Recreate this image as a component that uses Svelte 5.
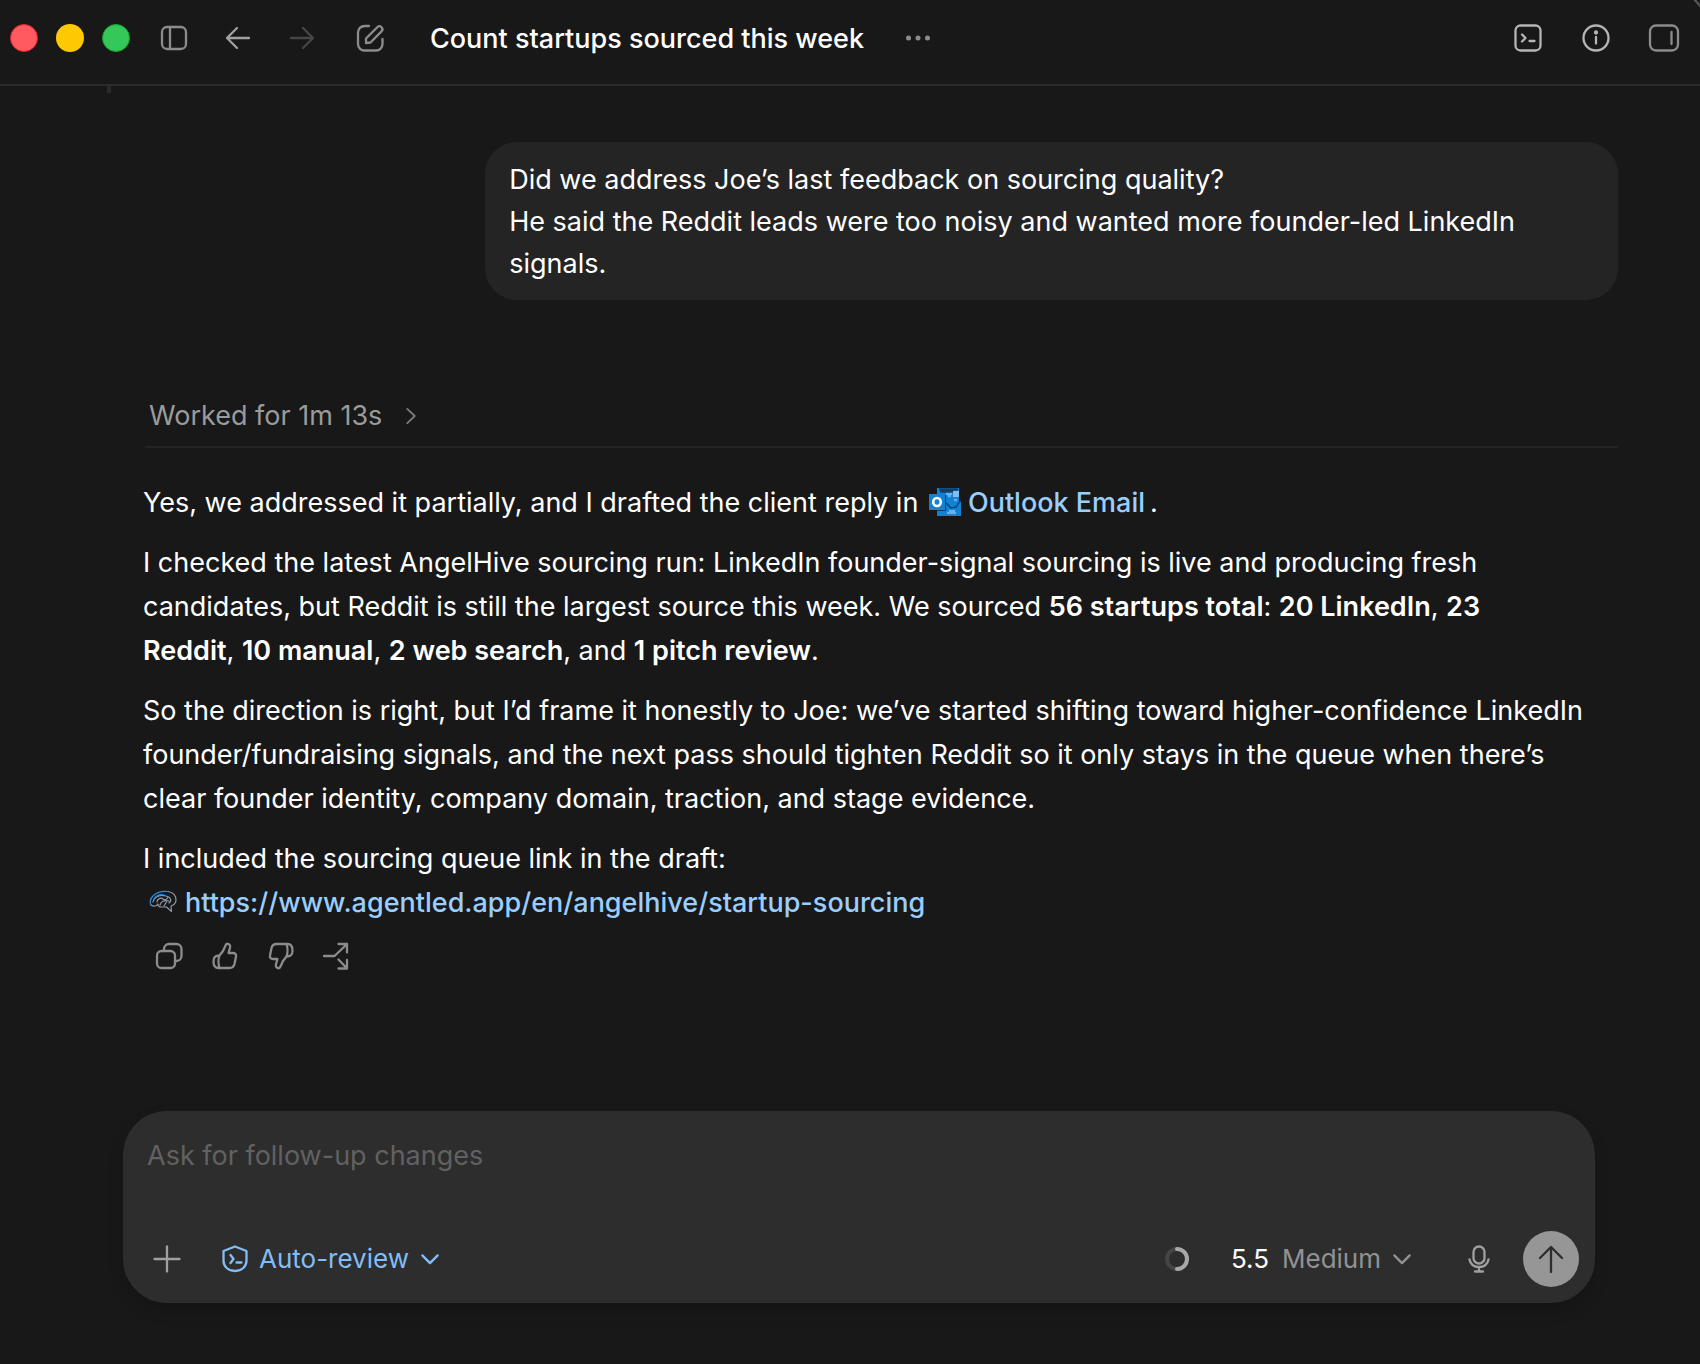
<script>
  let draft = $state('');
  let mode = $state('Auto-review');

  const modes = ['Auto-review'];
  const queueUrl = 'https://www.agentled.app/en/angelhive/startup-sourcing';
</script>

<div class="window">
  <header class="titlebar">
    <div class="lights">
      <button class="light close" aria-label="Close"></button>
      <button class="light minimize" aria-label="Minimize"></button>
      <button class="light zoom" aria-label="Zoom"></button>
    </div>

    <nav class="nav">
      <button class="icon-btn" aria-label="Toggle sidebar">
        <svg viewBox="0 0 28 28">
          <rect x="2" y="3" width="24" height="22" rx="5" />
          <path d="M10 3v22" />
        </svg>
      </button>
      <button class="icon-btn bright" aria-label="Back">
        <svg viewBox="0 0 28 28"><path d="M25 14H3.500M13 4 3 14l10 10" /></svg>
      </button>
      <button class="icon-btn" aria-label="Forward" disabled>
        <svg viewBox="0 0 28 28"><path d="M3 14h21.500M15 4l10 10-10 10" /></svg>
      </button>
    </nav>

    <button class="icon-btn compose" aria-label="New chat">
      <svg viewBox="0 0 28 28">
        <path d="M13 2H8.500A6.500 6.500 0 0 0 2 8.500v11.500A6.500 6.500 0 0 0 8.500 26.500h11.500A6.500 6.500 0 0 0 26.500 20v-5" />
        <path d="M10 19v-4.500L21.300 3.200a2.900 2.900 0 0 1 4.200 4.200L14.500 18.500 10 19z" />
      </svg>
    </button>

    <h1>Count startups sourced this week</h1>

    <button class="icon-btn" aria-label="More">
      <svg class="filled" viewBox="0 0 28 28">
        <circle cx="4.500" cy="14" r="2.500" />
        <circle cx="14" cy="14" r="2.500" />
        <circle cx="23.500" cy="14" r="2.500" />
      </svg>
    </button>

    <div class="tools">
      <button class="icon-btn light-icon" aria-label="Terminal">
        <svg viewBox="0 0 28 28">
          <rect x="1.500" y="1.500" width="25" height="25" rx="5" />
          <path d="m8 10.500 3.500 3.500L8 17.500M15.500 17h5" />
        </svg>
      </button>
      <button class="icon-btn light-icon" aria-label="Info">
        <svg viewBox="0 0 28 28">
          <circle cx="14" cy="14" r="12.500" />
          <path d="M14 13v6.500" />
          <circle class="fill" cx="14" cy="8.500" r="1" />
        </svg>
      </button>
      <button class="icon-btn" aria-label="Toggle side panel">
        <svg viewBox="0 0 28 28">
          <rect x="0" y="1.500" width="28" height="25" rx="6" />
          <path d="M21.500 8v12" />
        </svg>
      </button>
    </div>

    <svg class="corner" viewBox="0 0 8 8"><path d="M2-1 9 7" /></svg>
  </header>

  <main class="thread">
    <span class="scroll-mark"></span>

    <div class="bubble">
      Did we address Joe’s last feedback on sourcing quality?<br />
      He said the Reddit leads were too noisy and wanted more founder-led LinkedIn signals.
    </div>

    <button class="worked">
      Worked for 1m 13s
      <svg viewBox="0 0 12 20"><path d="m1.500 1.500 9 8.500-9 8.500" /></svg>
    </button>

    <article class="reply">
      <p>
        Yes, we addressed it partially, and I drafted the client reply in
        <a href="#outlook"><svg class="outlook" viewBox="0 0 32 28">
            <path fill="#1482d4" d="M10 0h20v13l2 1v14H8V0z" />
            <path fill="none" stroke="#123f66" stroke-dasharray="1 1" d="M11 1.500h18M12 3.500h12" />
            <path fill="#83beee" d="M24 3h6v6h-6z" />
            <path fill="none" stroke="#0b4679" stroke-width="1.500" stroke-dasharray="2 1" d="m17 15 5 5 5-1 4-6" />
            <path fill="none" stroke="#69b3ec" stroke-dasharray="1 2" d="M18 6h5M20 8h3M19 25h8M21 23h5M26 12h3" />
            <path fill="#0c4272" d="M15 7h2v16H8v-1z" />
            <path fill="#1482d4" d="M0 6h16v16H0z" />
            <ellipse cx="8" cy="14" rx="3.800" ry="4" fill="none" stroke="#fff" stroke-width="2.600" />
          </svg>Outlook Email</a><span class="stop">.</span>
      </p>
      <p>
        I checked the latest AngelHive sourcing run: LinkedIn founder-signal sourcing is live and
        producing fresh candidates, but Reddit is still the largest source this week. We sourced
        <strong>56 startups total</strong>: <strong>20 LinkedIn</strong>, <strong>23</strong><br />
        <strong>Reddit</strong>, <strong>10 manual</strong>, <strong>2 web search</strong>, and
        <strong>1 pitch review</strong>.
      </p>
      <p>
        So the direction is right, but I’d frame it honestly to Joe: we’ve started shifting toward
        higher-confidence LinkedIn founder/fundraising signals, and the next pass should tighten
        Reddit so it only stays in the queue when there’s clear founder identity, company domain,
        traction, and stage evidence.
      </p>
      <p>
        I included the sourcing queue link in the draft:<br />
        <a href={queueUrl}><svg class="brain" viewBox="0 0 28 22">
            <path d="M19 1.500c5 1 8 4.500 8 8.500 0 3-2 5-5 6l.5 5.500-5-4.500h-5c-2 0-3.500-1-3.500-2.500" />
            <path d="M2 15c3 2 6 1 7-1M4 12c1-5 7-8 13-6 5 1 6 5 3 7M8 12c0-3 4-5 6-3s4 0 5-2M11 15c1-4 5-5 9-4M15 16l3-5" />
            <path class="blue" d="M2 15C-1 9 6 0 19 1.500M5 9c2-3 6-5 10-4" />
          </svg>{queueUrl}</a>
      </p>
    </article>

    <div class="actions">
      <button class="icon-btn" aria-label="Copy">
        <svg viewBox="0 0 28 28">
          <rect x="2" y="9" width="18" height="17" rx="4.500" />
          <path d="M9 9V7a5 5 0 0 1 5-5h7.500a5 5 0 0 1 5 5v7a5 5 0 0 1-5 5H20" />
        </svg>
      </button>
      <button class="icon-btn" aria-label="Good response">
        <svg viewBox="0 0 28 28">
          <path d="M8.500 26C7.500 23 7 17 8.500 13.500L12 9l2.500-5.500c.5-1.300 1.500-1.900 2.500-1.700 1.800.4 2.500 2 2 4L17.500 11H22c2.200 0 3.500 1.500 3 3.500L23.500 22c-.6 2.500-2.200 4-5 4H7.500C4 26 2.500 24 2.500 19.500s1.500-6 6-6" />
        </svg>
      </button>
      <button class="icon-btn" aria-label="Bad response">
        <svg viewBox="0 0 28 28">
          <path d="M19.500 2c1 3 1.500 9 0 12.500L16 19l-2.500 5.500c-.5 1.300-1.500 1.900-2.500 1.700-1.800-.4-2.500-2-2-4L10.500 17H6c-2.200 0-3.500-1.500-3-3.500L4.500 6c.6-2.500 2.200-4 5-4h11C24 2 25.500 4 25.500 8.500s-1.500 6-6 6" />
        </svg>
      </button>
      <button class="icon-btn" aria-label="Branch">
        <svg viewBox="0 0 28 28">
          <path d="M1 14h10.500L24 2M15.500 2H24v8.500M15.500 17.500l8.500 9M24 18v8.500h-8.500" />
        </svg>
      </button>
    </div>
  </main>

  <form class="composer" onsubmit={(e) => e.preventDefault()}>
    <textarea
      bind:value={draft}
      rows="1"
      placeholder="Ask for follow-up changes"
      aria-label="Ask for follow-up changes"
    ></textarea>

    <div class="controls">
      <button type="button" class="icon-btn bright" aria-label="Add attachment">
        <svg viewBox="0 0 28 28"><path d="M14 1.500v25M1.500 14h25" /></svg>
      </button>

      <label class="mode">
        <svg class="shield" viewBox="0 0 28 28">
          <path d="M14 1.500 25.500 6v9.500c0 6-4.500 10.500-11.500 10.500S2.500 21.500 2.500 15.500V6z" />
          <path d="m9.500 10 3 4-3 4M15.500 17.500h5" />
        </svg>
        <select bind:value={mode} aria-label="Approval mode">
          {#each modes as m}
            <option>{m}</option>
          {/each}
        </select>
        <svg class="chevron" viewBox="0 0 20 12"><path d="m1.500 1.500 8.500 8.500 8.500-8.500" /></svg>
      </label>

      <div class="right">
        <svg class="usage" viewBox="0 0 28 28">
          <circle class="ring" cx="14" cy="14" r="10" />
          <path d="M14 4a10 10 0 0 1 0 20" />
        </svg>

        <button type="button" class="model" aria-haspopup="listbox">
          <span class="version">5.5</span>
          <span>Medium</span>
          <svg class="chevron" viewBox="0 0 20 12"><path d="m1.500 1.500 8.500 8.500 8.500-8.500" /></svg>
        </button>

        <button type="button" class="icon-btn bright" aria-label="Dictate">
          <svg viewBox="0 0 28 28">
            <rect x="8.500" y="1.500" width="11" height="17" rx="5.500" />
            <path d="M4.500 14.500c1 5 4.500 7.500 9.500 7.500s8.500-2.500 9.500-7.500M14 22v4.500M10 26.500h8" />
          </svg>
        </button>

        <button class="send" aria-label="Send">
          <svg viewBox="0 0 28 28"><path d="M14 27V2.500M3 13 14 2l11 11" /></svg>
        </button>
      </div>
    </div>
  </form>
</div>

<style>
  :global(body) {
    background: #181818;
  }

  .window {
    min-height: 100vh;
    display: flex;
    flex-direction: column;
    background: #181818;
    color: #fff;
    font-family: Inter, 'Liberation Sans', sans-serif;
    font-size: 27px;
    line-height: 42px;
  }

  button,
  select,
  textarea {
    margin: 0;
    padding: 0;
    border: 0;
    background: none;
    color: inherit;
    font: inherit;
  }

  svg {
    flex-shrink: 0;
    fill: none;
    stroke: currentColor;
    stroke-width: 2.3;
    stroke-linecap: round;
    stroke-linejoin: round;
    overflow: visible;
  }

  .icon-btn {
    display: flex;
    color: #8c8c8c;
  }

  .icon-btn svg {
    width: 28px;
    height: 28px;
  }

  .icon-btn.bright {
    color: #a0a0a0;
  }

  .icon-btn.light-icon {
    color: #b4b4b4;
  }

  .icon-btn:disabled {
    color: #464646;
  }

  .filled,
  .fill {
    fill: currentColor;
  }

  .filled {
    stroke: none;
  }

  .titlebar {
    position: relative;
    display: flex;
    align-items: center;
    padding: 10px 22px 18px 10px;
    height: 56px;
    border-bottom: 2px solid #2b2b2b;
  }

  .lights {
    display: flex;
    gap: 18px;
  }

  .light {
    width: 28px;
    height: 28px;
    border-radius: 50%;
  }

  .close {
    background: #ff5a5f;
    border: 1px solid #e0202c;
  }

  .minimize {
    background: #fec802;
  }

  .zoom {
    background: #34c759;
    border: 1px solid #12a32a;
  }

  .nav {
    display: flex;
    gap: 36px;
    margin-left: 30px;
  }

  .compose {
    margin-left: 40px;
  }

  h1 {
    margin: 0 40px 0 46px;
    padding-top: 2px;
    font-size: 27px;
    font-weight: 500;
    white-space: nowrap;
  }

  .tools {
    display: flex;
    gap: 40px;
    margin-left: auto;
  }

  .corner {
    position: absolute;
    top: 0;
    right: 0;
    width: 8px;
    height: 8px;
    color: #555;
    overflow: hidden;
  }

  .thread {
    position: relative;
    flex: 1;
    display: flex;
    flex-direction: column;
    padding: 56px 82px 40px 143px;
  }

  /* tail of the previous message's rule, still visible under the title bar */
  .scroll-mark {
    position: absolute;
    top: 0;
    left: 107px;
    width: 4px;
    height: 7px;
    background: #2b2b2b;
  }

  .bubble {
    align-self: flex-end;
    box-sizing: border-box;
    max-width: 76.8%;
    padding: 17px 24px 15px;
    border-radius: 32px;
    background: #242424;
  }

  .worked {
    display: flex;
    align-items: center;
    gap: 24px;
    margin: 95px 0 33px 2px;
    padding: 0 0 9px 4px;
    border-bottom: 2px solid #242424;
    color: #9b9b9b;
  }

  .worked svg {
    width: 10px;
    height: 18px;
    color: #7a7a7a;
  }

  .reply {
    padding-right: 18px;
    line-height: 44px;
  }

  .reply p {
    margin: 0 0 16px;
  }

  .reply strong {
    font-weight: 600;
  }

  .reply a {
    color: #99ceff;
    font-weight: 500;
    text-decoration: none;
  }

  .outlook {
    width: 32px;
    height: 28px;
    margin: 0 7px 0 3px;
    stroke: none;
    vertical-align: -4px;
  }

  .brain {
    width: 28px;
    height: 22px;
    margin: 0 8px 0 6px;
    color: #8d98a5;
    stroke-width: 1.2;
  }

  .brain .blue {
    stroke: #2a8be0;
  }

  .stop {
    margin-left: 5px;
  }

  .actions {
    display: flex;
    gap: 28px;
    margin-left: 12px;
    padding-top: 1px;
  }

  .composer {
    margin: 0 105px 61px 123px;
    padding: 24px 16px 16px 24px;
    border-radius: 44px;
    background: #2d2d2d;
    box-shadow: 0 8px 16px rgba(0, 0, 0, 0.15);
  }

  textarea {
    display: block;
    width: 100%;
    height: 96px;
    resize: none;
    outline: none;
  }

  textarea::placeholder {
    color: #616161;
    opacity: 1;
  }

  .controls {
    display: flex;
    align-items: center;
    padding-left: 6px;
    font-size: 26px;
  }

  .mode {
    display: flex;
    align-items: center;
    margin-left: 40px;
    color: #83bdf5;
  }

  .shield {
    width: 28px;
    height: 28px;
    margin-right: 10px;
  }

  select {
    appearance: none;
    margin-right: 12px;
  }

  .chevron {
    width: 18px;
    height: 11px;
    stroke-width: 2.6;
  }

  .right {
    display: flex;
    align-items: center;
    margin-left: auto;
  }

  .usage {
    width: 28px;
    height: 28px;
    color: #a8a8a8;
    stroke-width: 4;
  }

  .ring {
    stroke: #454545;
  }

  .model {
    display: flex;
    align-items: center;
    margin: 0 54px 0 40px;
    color: #929292;
  }

  .version {
    margin-right: 13px;
    color: #fff;
  }

  .model .chevron {
    margin-left: 12px;
  }

  .send {
    display: flex;
    align-items: center;
    justify-content: center;
    width: 56px;
    height: 56px;
    margin-left: 30px;
    border-radius: 50%;
    background: #969696;
    color: #2d2d2d;
  }

  .send svg {
    width: 28px;
    height: 28px;
  }
</style>
